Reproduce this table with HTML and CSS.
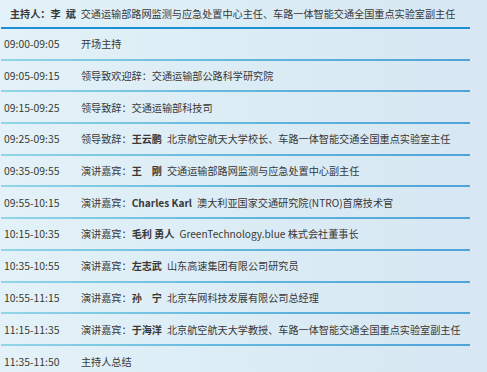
FILE: index.html
```html
<!DOCTYPE html>
<html lang="zh-CN">
<head>
<meta charset="utf-8">
<link rel="stylesheet" href="styles.css">
</head>
<body>
<div class="agenda">
  <div class="host">
    <b>主持人：李<span class="gap"></span>斌</b>交通运输部路网监测与应急处置中心主任、车路一体智能交通全国重点实验室副主任
  </div>
  <div class="row"><span class="time">09:00-09:05</span><span class="desc">开场主持</span></div>
  <div class="row"><span class="time">09:05-09:15</span><span class="desc">领导致欢迎辞：交通运输部公路科学研究院</span></div>
  <div class="row"><span class="time">09:15-09:25</span><span class="desc">领导致辞：交通运输部科技司</span></div>
  <div class="row"><span class="time">09:25-09:35</span><span class="desc">领导致辞：<b>王云鹏</b>北京航空航天大学校长、车路一体智能交通全国重点实验室主任</span></div>
  <div class="row"><span class="time">09:35-09:55</span><span class="desc">演讲嘉宾：<b>王　刚</b>交通运输部路网监测与应急处置中心副主任</span></div>
  <div class="row"><span class="time">09:55-10:15</span><span class="desc">演讲嘉宾：<b>Charles Karl</b>澳大利亚国家交通研究院(NTRO)首席技术官</span></div>
  <div class="row"><span class="time">10:15-10:35</span><span class="desc">演讲嘉宾：<b>毛利 勇人</b>GreenTechnology.blue 株式会社董事长</span></div>
  <div class="row"><span class="time">10:35-10:55</span><span class="desc">演讲嘉宾：<b>左志武</b>山东高速集团有限公司研究员</span></div>
  <div class="row"><span class="time">10:55-11:15</span><span class="desc">演讲嘉宾：<b>孙　宁</b>北京车网科技发展有限公司总经理</span></div>
  <div class="row"><span class="time">11:15-11:35</span><span class="desc">演讲嘉宾：<b>于海洋</b>北京航空航天大学教授、车路一体智能交通全国重点实验室副主任</span></div>
  <div class="row last"><span class="time">11:35-11:50</span><span class="desc">主持人总结</span></div>
</div>
</body>
</html>
```
FILE: styles.css
```css
html, body {
  margin: 0;
  padding: 0;
}
body {
  width: 487px;
  height: 372px;
  overflow: hidden;
  background: linear-gradient(90deg, #e3f2f8 0%, #dcecf5 50%, #d7e7f3 100%);
  font-family: "Noto Sans CJK SC", "Noto Sans", sans-serif;
  font-size: 10.15px;
  color: #383838;
}
.agenda {
  width: 469px;
  padding-left: 1px;
}
.host {
  box-sizing: border-box;
  height: 29px;
  padding-left: 9px;
  display: flex;
  align-items: center;
  white-space: nowrap;
  border-bottom: 2px solid #1e8fd2;
}
.host b {
  font-weight: 700;
  margin-right: 5px;
}
.gap {
  display: inline-block;
  width: 5px;
}
.row {
  box-sizing: border-box;
  height: 31.7px;
  display: flex;
  align-items: center;
  white-space: nowrap;
  border-bottom: 2px solid;
  border-image: linear-gradient(90deg, #93d5e7 0%, #62b7de 50%, #4ea4d8 100%) 1;
}
.row.last {
  border-bottom: none;
  border-image: none;
}
.time {
  width: 77px;
  padding-left: 3px;
  flex: none;
  color: #3a3a30;
  font-size: 10.4px;
}
.desc b {
  font-weight: 700;
  margin-right: 5px;
}
```
